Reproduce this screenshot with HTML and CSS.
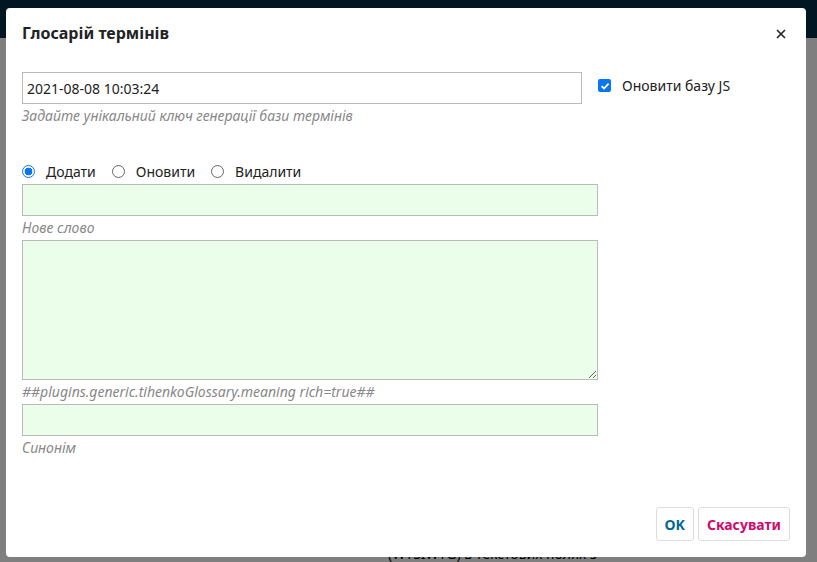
FILE: index.html
```html
<!DOCTYPE html>
<html lang="uk">
<head>
<meta charset="utf-8">
<title>Глосарій термінів</title>
<link rel="stylesheet" href="styles.css">
</head>
<body>
<div class="page">
  <header class="page-header"></header>
  <main class="page-body">
    <p class="page-text">(WYSIWYG) в текстових полях з</p>
  </main>
</div>
<div class="overlay">
  <div class="modal">
    <div class="modal-head">
      <h2 class="modal-title">Глосарій термінів</h2>
      <button class="close" type="button" aria-label="Закрити">
        <svg width="10" height="10" viewBox="0 0 10 10"><path d="M1 1L9 9M9 1L1 9" stroke="#222" stroke-width="1.6" fill="none"/></svg>
      </button>
    </div>
    <div class="modal-body">
      <div class="key-row">
        <div class="key-col">
          <input class="field key-input" type="text" value="2021-08-08 10:03:24">
          <div class="hint">Задайте унікальний ключ генерації бази термінів</div>
        </div>
        <label class="check">
          <span class="checkbox"><svg width="10" height="10" viewBox="0 0 10 10"><path d="M1.6 5.2L4 7.5L8.6 2.6" stroke="#fff" stroke-width="1.8" fill="none"/></svg></span>
          Оновити базу JS
        </label>
      </div>
      <div class="radios">
        <label class="radio"><span class="dot on"></span>Додати</label>
        <label class="radio"><span class="dot"></span>Оновити</label>
        <label class="radio"><span class="dot"></span>Видалити</label>
      </div>
      <div class="green-col">
        <input class="field green" type="text">
        <div class="hint">Нове слово</div>
        <div class="textarea-wrap">
          <textarea class="field green area"></textarea>
        </div>
        <div class="hint">##plugins.generic.tihenkoGlossary.meaning rich=true##</div>
        <input class="field green synonym" type="text">
        <div class="hint">Синонім</div>
      </div>
    </div>
    <div class="modal-foot">
      <button class="btn ok" type="button">OK</button>
      <button class="btn cancel" type="button">Скасувати</button>
    </div>
  </div>
</div>
</body>
</html>
```
FILE: styles.css
```css
* { box-sizing: border-box; }
html, body { margin: 0; padding: 0; }
body {
  width: 817px;
  height: 562px;
  overflow: hidden;
  font-family: "Noto Sans", "Open Sans", sans-serif;
  font-size: 14px;
  color: #222;
  position: relative;
  background: #fff;
}
.page { height: 562px; display: flex; flex-direction: column; }
.page-header { height: 38px; background: #002d44; }
.page-body { flex: 1; background: #fff; position: relative; }
.page-text {
  margin: 0;
  position: absolute;
  left: 388px;
  top: 506px;
  font-size: 14px;
  color: #000;
}
.overlay {
  position: absolute;
  inset: 0;
  background: rgba(0, 0, 0, 0.5);
  padding: 8px 11px 0 6px;
}
.modal {
  background: #fff;
  width: 800px;
  height: 549px;
  border-radius: 4px;
  display: flex;
  flex-direction: column;
}
.modal-head {
  display: flex;
  align-items: center;
  justify-content: space-between;
  padding: 0 18px 0 16px;
  height: 50px;
}
.modal-title {
  margin: 0;
  font-size: 16px;
  font-weight: 700;
  color: #222;
}
.close {
  border: 0;
  background: none;
  padding: 0;
  width: 14px;
  height: 14px;
  margin-top: 2px;
  display: flex;
  align-items: center;
  justify-content: center;
  cursor: pointer;
}
.modal-body { padding: 14px 16px 0 16px; flex: 1; }
.key-row { display: flex; align-items: flex-start; }
.key-col { width: 560px; }
.field {
  display: block;
  width: 100%;
  height: 32px;
  border: 1px solid #bbb;
  border-radius: 0;
  font-family: "Noto Sans", "Open Sans", sans-serif;
  font-size: 14px;
  color: #222;
  padding: 0 4px;
  background: #fff;
  margin: 0;
}
.hint {
  font-style: italic;
  color: #888;
  font-size: 14px;
  line-height: 20px;
  margin-top: 2px;
}
.check {
  display: flex;
  align-items: center;
  margin-left: 16px;
  margin-top: 4px;
  gap: 11px;
  font-size: 14px;
  color: #222;
}
.checkbox {
  width: 13px;
  height: 13px;
  border-radius: 2px;
  background: #0a75f0;
  display: flex;
  align-items: center;
  justify-content: center;
}
.radios {
  display: flex;
  gap: 16px;
  margin-top: 34px;
  height: 22px;
  align-items: center;
}
.radio { display: flex; align-items: center; gap: 11px; color: #222; }
.dot {
  width: 13px;
  height: 13px;
  border-radius: 50%;
  border: 1px solid #666;
  background: #fff;
  display: block;
}
.dot.on {
  border: 1px solid #0a75f0;
  background: radial-gradient(circle, #0a75f0 0 3.6px, #fff 4.2px);
}
.green-col { width: 576px; margin-top: 2px; }
.green { background: #eafeea; }
.textarea-wrap { margin-top: 2px; }
.area { height: 140px; resize: vertical; }
.synonym { margin-top: 2px; }
.modal-foot {
  display: flex;
  justify-content: flex-end;
  gap: 4px;
  padding: 0 16px 16px 0;
}
.btn {
  height: 34px;
  border: 1px solid #ddd;
  border-radius: 3px;
  background: #fff;
  font-family: "Noto Sans", "Open Sans", sans-serif;
  font-size: 14px;
  font-weight: 700;
  padding: 0 8px;
  cursor: pointer;
}
.ok { color: #006798; }
.cancel { color: #d00a6c; }
```
